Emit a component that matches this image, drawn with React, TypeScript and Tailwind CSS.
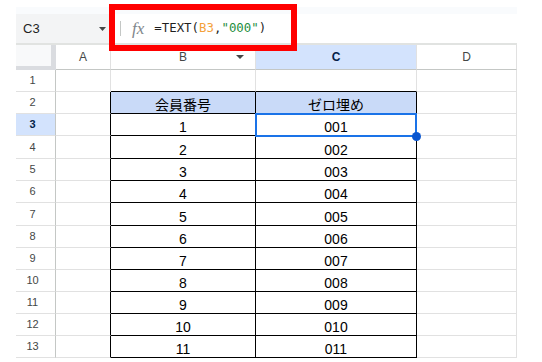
import { Fragment } from "react";

const rows = [
  { n: 1, b: "", c: "" },
  { n: 2, b: "会員番号", c: "ゼロ埋め" },
  { n: 3, b: "1", c: "001" },
  { n: 4, b: "2", c: "002" },
  { n: 5, b: "3", c: "003" },
  { n: 6, b: "4", c: "004" },
  { n: 7, b: "5", c: "005" },
  { n: 8, b: "6", c: "006" },
  { n: 9, b: "7", c: "007" },
  { n: 10, b: "8", c: "008" },
  { n: 11, b: "9", c: "009" },
  { n: 12, b: "10", c: "010" },
  { n: 13, b: "11", c: "011" },
];

function Cell({ r, c, text }: { r: number; c: number; text: string }) {
  const inTable = r >= 2 && (c === 2 || c === 3);
  const rightBlack = inTable || (c === 1 && r >= 2);
  const bottomBlack = inTable || (r === 1 && (c === 2 || c === 3));
  const header = r === 2 && inTable;
  return (
    <div
      className={
        "flex items-end justify-center border-r border-b text-[14px] leading-[16px] text-black " +
        (rightBlack ? "border-r-black " : "border-r-[#e1e1e1] ") +
        (bottomBlack ? "border-b-black " : "border-b-[#e1e1e1] ") +
        (header ? "bg-[#c9daf8]" : "bg-white")
      }
    >
      {text}
    </div>
  );
}

function ColHead({ label, active, arrow }: { label: string; active?: boolean; arrow?: boolean }) {
  return (
    <div
      className={
        "grid grid-cols-[1fr_auto_1fr] items-center border-r border-b border-r-[#e1e1e1] border-b-[#c4c7c5] text-[12px] " +
        (active ? "bg-[#d3e3fd] font-bold text-[#041e49]" : "bg-white text-[#444746]")
      }
    >
      <span />
      <span>{label}</span>
      <span className="flex justify-end pr-[11px]">
        {arrow && (
          <svg width="8" height="4" viewBox="0 0 8 4">
            <path d="M0 0 L8 0 L4 4 Z" fill="#444746" />
          </svg>
        )}
      </span>
    </div>
  );
}

export default function App() {
  return (
    <div className="relative w-[542px] h-[362px] overflow-hidden bg-white font-['Liberation_Sans','Noto_Sans_CJK_JP',sans-serif]">
      <div className="ml-4 w-[501px]">
        <div className="mt-[7px] h-[7px] bg-[#f9fbfd]" />
        <div className="flex h-[31px] items-center border-b-2 border-[#e1e3e1]">
          <div className="flex h-full w-[94px] items-center justify-between bg-[#f3f4f5] pl-[7px] pr-[4px] text-[13px] text-[#1f1f1f]">
            <span>C3</span>
            <svg width="7" height="4" viewBox="0 0 7 4">
              <path d="M0 0 L7 0 L3.5 4 Z" fill="#444746" />
            </svg>
          </div>
          <div className="ml-[10px] h-[15px] w-px bg-[#c4c7c5]" />
          <span className="ml-[11px] font-['Liberation_Serif',serif] text-[17px] italic text-[#80868b]">fx</span>
          <span className="ml-[10px] font-['DejaVu_Sans_Mono',monospace] text-[12.4px] text-[#1f1f1f]">
            =TEXT(<span className="text-[#f4a13a]">B3</span>,<span className="text-[#1e8e3e]">"000"</span>)
          </span>
        </div>
        <div className="relative grid grid-cols-[40px_55px_145px_161px_100px] grid-rows-[25px_22px_22px_22px_23px_22px_22px_23px_22px_22px_22px_22px_22px_22px]">
          <div className="border-r-[5px] border-b-[4px] border-[#dadce0] bg-[#f8f9fa]" />
          <ColHead label="A" />
          <ColHead label="B" arrow />
          <ColHead label="C" active />
          <ColHead label="D" />
          {rows.map((row) => (
            <Fragment key={row.n}>
              <div
                className={
                  "flex items-center justify-center border-r border-b border-r-[#c4c7c5] border-b-[#e1e1e1] pr-[6px] text-[11px] " +
                  (row.n === 3 ? "bg-[#d3e3fd] font-bold text-[#041e49]" : "bg-white text-[#444746]")
                }
              >
                {row.n}
              </div>
              <Cell r={row.n} c={1} text="" />
              <Cell r={row.n} c={2} text={row.b} />
              <Cell r={row.n} c={3} text={row.c} />
              <Cell r={row.n} c={4} text="" />
            </Fragment>
          ))}
          <div className="absolute left-[239px] top-[68px] h-[24px] w-[162px] border-2 border-[#1a73e8]" />
          <div className="absolute left-[396px] top-[87px] h-[9px] w-[9px] rounded-full bg-[#0b57d0]" />
        </div>
      </div>
      <div className="absolute left-[109px] top-[4px] h-[47px] w-[188px] border-[6px] border-[#ff0000]" />
    </div>
  );
}
